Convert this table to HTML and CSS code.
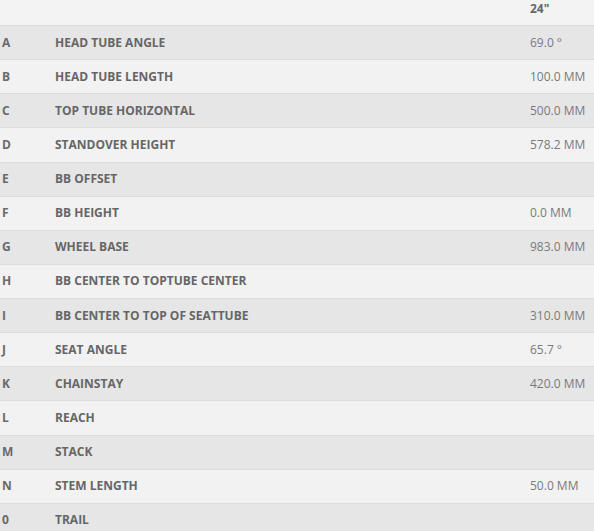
FILE: index.html
```html
<!DOCTYPE html>
<html>
<head>
<meta charset="utf-8">
<link rel="stylesheet" href="styles.css">
</head>
<body>
<div class="geo">
  <div class="row head"><span class="k"></span><span class="name"></span><span class="val">24"</span></div>
  <div class="row odd"><span class="k">A</span><span class="name">HEAD TUBE ANGLE</span><span class="val">69.0 °</span></div>
  <div class="row even"><span class="k">B</span><span class="name">HEAD TUBE LENGTH</span><span class="val">100.0 MM</span></div>
  <div class="row odd"><span class="k">C</span><span class="name">TOP TUBE HORIZONTAL</span><span class="val">500.0 MM</span></div>
  <div class="row even"><span class="k">D</span><span class="name">STANDOVER HEIGHT</span><span class="val">578.2 MM</span></div>
  <div class="row odd"><span class="k">E</span><span class="name">BB OFFSET</span><span class="val"></span></div>
  <div class="row even"><span class="k">F</span><span class="name">BB HEIGHT</span><span class="val">0.0 MM</span></div>
  <div class="row odd"><span class="k">G</span><span class="name">WHEEL BASE</span><span class="val">983.0 MM</span></div>
  <div class="row even"><span class="k">H</span><span class="name">BB CENTER TO TOPTUBE CENTER</span><span class="val"></span></div>
  <div class="row odd"><span class="k">I</span><span class="name">BB CENTER TO TOP OF SEATTUBE</span><span class="val">310.0 MM</span></div>
  <div class="row even"><span class="k">J</span><span class="name">SEAT ANGLE</span><span class="val">65.7 °</span></div>
  <div class="row odd"><span class="k">K</span><span class="name">CHAINSTAY</span><span class="val">420.0 MM</span></div>
  <div class="row even"><span class="k">L</span><span class="name">REACH</span><span class="val"></span></div>
  <div class="row odd"><span class="k">M</span><span class="name">STACK</span><span class="val"></span></div>
  <div class="row even"><span class="k">N</span><span class="name">STEM LENGTH</span><span class="val">50.0 MM</span></div>
  <div class="row odd"><span class="k">0</span><span class="name">TRAIL</span><span class="val"></span></div>
</div>
</body>
</html>
```

FILE: styles.css
```css
html, body {
  margin: 0;
  padding: 0;
  background: #f2f2f2;
}
body {
  font-family: "Open Sans", "Noto Sans", sans-serif;
  font-size: 12px;
  color: #666666;
}
.geo {
  display: flex;
  flex-direction: column;
  width: 594px;
}
.row {
  display: grid;
  grid-template-columns: 55px 475px 1fr;
  align-items: center;
  height: 33.14px;
  border-bottom: 1px solid #dcdcdc;
  line-height: 18px;
}
.row.head {
  height: 25px;
  align-items: start;
  background: #f3f3f3;
}
.row.odd { background: #e6e6e6; }
.row.even { background: #f2f2f2; }
.k {
  padding-left: 2px;
  font-weight: 700;
  color: #6a6a6a;
}
.name {
  font-weight: 700;
  color: #666666;
}
.val {
  color: #7a7a7a;
  font-weight: 400;
}
.head .val {
  font-weight: 700;
  color: #666666;
}
```
